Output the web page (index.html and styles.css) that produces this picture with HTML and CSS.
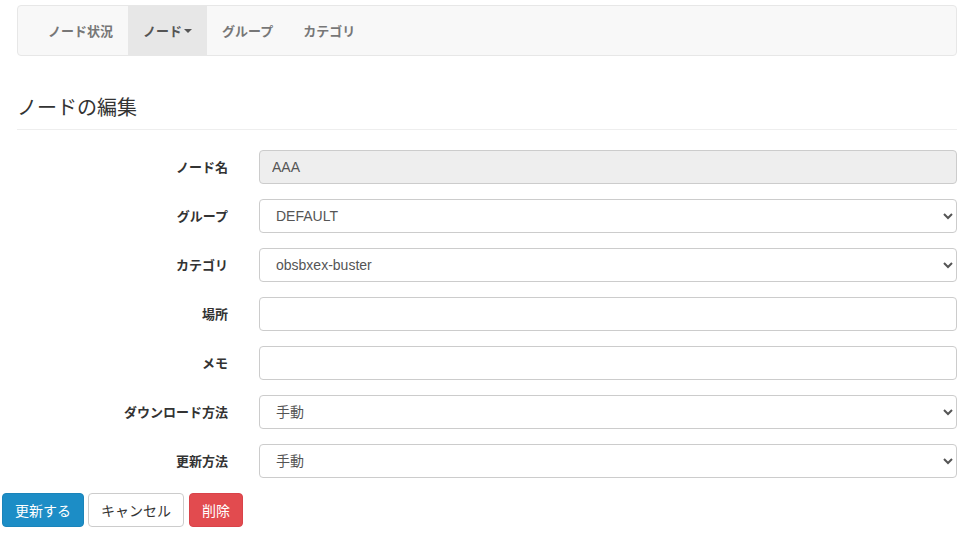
FILE: index.html
```html
<!DOCTYPE html>
<html lang="ja">
<head>
<meta charset="utf-8">
<title>ノードの編集</title>
<link rel="stylesheet" href="styles.css">
</head>
<body>
<div class="page">
  <nav class="navbar">
    <ul class="nav">
      <li><a class="nav-link">ノード状況</a></li>
      <li class="active"><a class="nav-link">ノード<span class="caret"></span></a></li>
      <li><a class="nav-link">グループ</a></li>
      <li><a class="nav-link">カテゴリ</a></li>
    </ul>
  </nav>

  <h3 class="page-title">ノードの編集</h3>

  <form class="form">
    <div class="row">
      <label class="label">ノード名</label>
      <input class="control readonly" type="text" value="AAA" readonly>
    </div>
    <div class="row">
      <label class="label">グループ</label>
      <select class="control"><option>DEFAULT</option></select>
    </div>
    <div class="row">
      <label class="label">カテゴリ</label>
      <select class="control"><option>obsbxex-buster</option></select>
    </div>
    <div class="row">
      <label class="label">場所</label>
      <input class="control" type="text" value="">
    </div>
    <div class="row">
      <label class="label">メモ</label>
      <input class="control" type="text" value="">
    </div>
    <div class="row">
      <label class="label">ダウンロード方法</label>
      <select class="control"><option>手動</option></select>
    </div>
    <div class="row">
      <label class="label">更新方法</label>
      <select class="control"><option>手動</option></select>
    </div>
    <div class="actions">
      <button type="button" class="btn btn-primary">更新する</button>
      <button type="button" class="btn btn-default">キャンセル</button>
      <button type="button" class="btn btn-danger">削除</button>
    </div>
  </form>
</div>
</body>
</html>
```

FILE: styles.css
```css
html, body {
  margin: 0;
  padding: 0;
  background: #fff;
}
body {
  font-family: "Liberation Sans", "Noto Sans CJK JP", sans-serif;
  font-size: 14px;
  color: #333;
}
.page {
  padding: 5px 11px 0 17px;
}
.navbar {
  height: 49px;
  background: #f8f8f8;
  border: 1px solid #e7e7e7;
  border-radius: 4px;
}
.nav {
  list-style: none;
  margin: 0;
  padding: 0 0 0 15px;
  display: flex;
  height: 49px;
}
.nav li {
  display: flex;
}
.nav-link {
  display: flex;
  align-items: center;
  padding: 0 15px;
  font-size: 13px;
  font-weight: bold;
  color: #777;
  font-family: "Noto Sans CJK JP", sans-serif;
}
.nav li.active .nav-link {
  background: #e7e7e7;
  color: #555;
}
.caret {
  display: inline-block;
  width: 0;
  height: 0;
  margin-left: 2px;
  border-top: 4px solid #555;
  border-left: 4px solid transparent;
  border-right: 4px solid transparent;
}
.page-title {
  margin: 36px 0 0;
  padding-bottom: 7px;
  font-size: 20px;
  font-weight: normal;
  line-height: 30px;
  color: #333;
  border-bottom: 1px solid #eee;
  font-family: "Noto Sans CJK JP", sans-serif;
}
.form {
  margin-top: 20px;
}
.row {
  display: flex;
  align-items: center;
  height: 34px;
  margin-bottom: 15px;
}
.label {
  width: 211px;
  flex: none;
  text-align: right;
  font-size: 13px;
  font-weight: bold;
  color: #333;
  font-family: "Noto Sans CJK JP", sans-serif;
  margin-right: 31px;
  position: relative;
  top: -1px;
}
.control {
  flex: 1;
  box-sizing: border-box;
  height: 34px;
  padding: 6px 12px;
  font-size: 14px;
  color: #555;
  background-color: #fff;
  border: 1px solid #ccc;
  border-radius: 4px;
  font-family: "Liberation Sans", "Noto Sans CJK JP", sans-serif;
  min-width: 0;
}
.control.readonly {
  background-color: #eee;
}
.actions {
  display: flex;
  gap: 4px;
  margin-left: -15px;
}
.btn {
  box-sizing: border-box;
  height: 34px;
  padding: 0 12px;
  font-size: 14px;
  border: 1px solid transparent;
  border-radius: 4px;
  font-family: "Noto Sans CJK JP", sans-serif;
  line-height: 1;
}
.btn-primary {
  background: #1c8dc6;
  border-color: #1a84ba;
  color: #fff;
}
.btn-default {
  background: #fff;
  border-color: #ccc;
  color: #333;
}
.btn-danger {
  background: #e24b4f;
  border-color: #d9434a;
  color: #fff;
  margin-left: 1px;
}
```
